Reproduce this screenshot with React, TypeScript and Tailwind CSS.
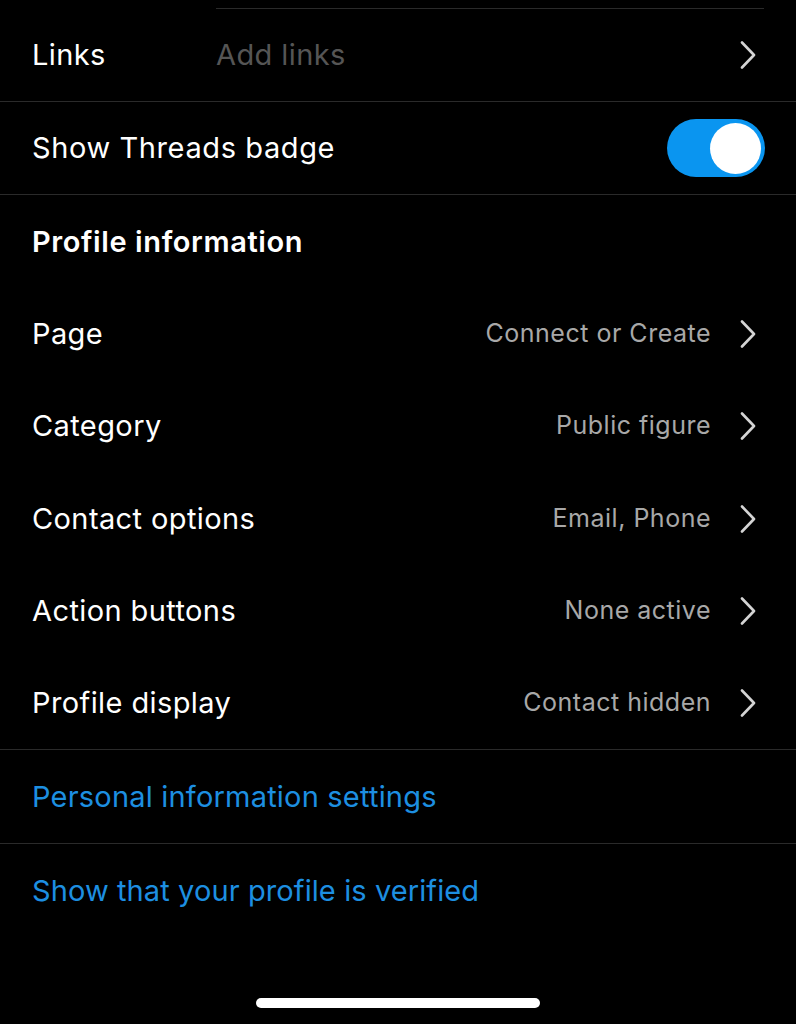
const Chevron = () => (
  <svg width="24" height="28" viewBox="0 0 24 28" fill="none" className="shrink-0">
    <path d="M6 1.5 L18 14 L6 26.5" stroke="#d4d4d4" strokeWidth="2.6" strokeLinecap="round" strokeLinejoin="round" />
  </svg>
)

const Divider = () => <div className="h-px bg-[#2a2a2a]" />

const NavRow = ({ label, value, h = 'h-[92px]' }: { label: string; value: string; h?: string }) => (
  <div className={`flex items-center justify-between pl-8 pr-[36px] ${h}`}>
    <span className="text-[29px] tracking-[0.4px] text-white">{label}</span>
    <div className="flex items-center gap-[25px]">
      <span className="text-[25px] tracking-[0.5px] text-[#a8a8a8]">{value}</span>
      <Chevron />
    </div>
  </div>
)

export default function App() {
  return (
    <div
      className="flex min-h-[1024px] w-[796px] flex-col bg-black"
      style={{ fontFamily: 'Inter, "Noto Sans", sans-serif' }}
    >
      <div className="h-[8px]" />
      <div className="ml-[216px] mr-[32px] h-px bg-[#2a2a2a]" />
      <div className="flex h-[92px] items-center pl-8 pr-[36px]">
        <span className="w-[184px] text-[29px] tracking-[0.4px] text-white">Links</span>
        <span className="flex-1 text-[29px] tracking-[0.4px] text-[#555555]">Add links</span>
        <Chevron />
      </div>
      <Divider />
      <div className="flex h-[92px] items-center justify-between pl-8 pr-[31px]">
        <span className="text-[29px] tracking-[0.6px] text-white">Show Threads badge</span>
        <div className="flex h-[58px] w-[98px] items-center justify-end rounded-full bg-[#0a95f0] pr-[4px]">
          <div className="h-[51px] w-[51px] rounded-full bg-white" />
        </div>
      </div>
      <Divider />
      <div className="flex h-[93px] items-center pl-8">
        <span className="text-[29px] font-semibold tracking-[0.6px] text-white">Profile information</span>
      </div>
      <NavRow label="Page" value="Connect or Create" />
      <NavRow label="Category" value="Public figure" />
      <NavRow label="Contact options" value="Email, Phone" h="h-[93px]" />
      <NavRow label="Action buttons" value="None active" />
      <NavRow label="Profile display" value="Contact hidden" />
      <Divider />
      <div className="flex h-[93px] items-center pl-8">
        <span className="text-[29px] tracking-[0.2px] text-[#1d8fe1]">Personal information settings</span>
      </div>
      <Divider />
      <div className="flex h-[93px] items-center pl-8">
        <span className="text-[29px] tracking-[0.1px] text-[#1d8fe1]">Show that your profile is verified</span>
      </div>
      <div className="mt-[61px] flex justify-center">
        <div className="h-[10px] w-[284px] rounded-full bg-white" />
      </div>
    </div>
  )
}
